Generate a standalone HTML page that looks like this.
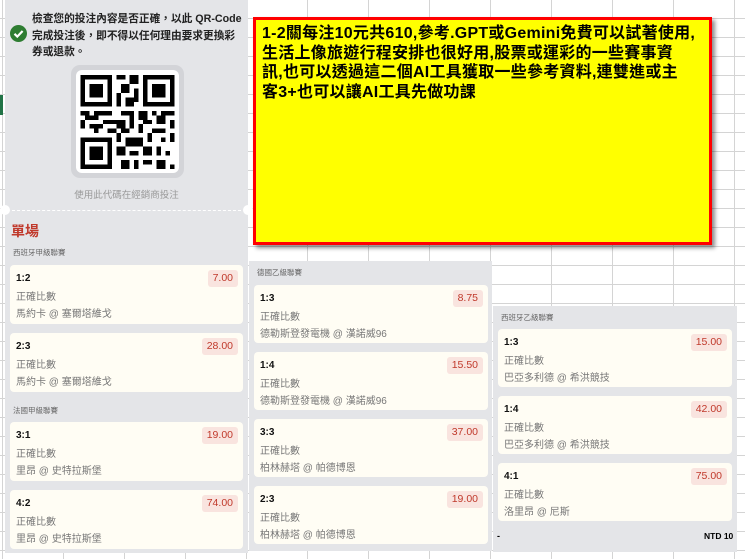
<!DOCTYPE html>
<html><head><meta charset="utf-8"><style>
*{margin:0;padding:0;box-sizing:border-box}
body{width:745px;height:559px;overflow:hidden;position:relative;background:#fff;font-family:"Liberation Sans","Noto Sans CJK TC",sans-serif;
background-image:linear-gradient(#d4d4d4 1px,transparent 1px),linear-gradient(90deg,#d4d4d4 1px,transparent 1px);
background-size:61px 19px;background-position:2px 18px}
.panel{position:absolute;background:#e4e5e8}
.card{position:absolute;background:#fffdf4;border-radius:4px}
.sc{position:absolute;left:6px;top:8px;font-size:10px;font-weight:bold;color:#111}
.t1{position:absolute;left:6px;top:23px;font-size:10px;color:#777}
.t2{position:absolute;left:6px;top:40px;font-size:10px;color:#777}
.od{position:absolute;right:5px;top:5px;height:17px;padding:0 5px;background:#f9e4df;color:#c0392b;font-size:10.5px;line-height:17px;border-radius:3px}
.lg{position:absolute;font-size:7.5px;color:#666}
.yb{position:absolute;left:253px;top:17px;width:459px;height:228px;background:#ffff00;border:3px solid #ff0000;box-shadow:3px 3px 4px rgba(0,0,0,.45);padding:4px 6px;font-size:16px;font-weight:bold;line-height:19.5px;color:#000;white-space:nowrap;letter-spacing:0.25px}
</style></head><body>
<div style="position:absolute;left:0;top:95px;width:3px;height:20px;background:#217346"></div>
<div class="panel" style="left:5px;top:0;width:243px;height:553px"></div>
<div style="position:absolute;left:12px;top:210px;width:229px;border-top:1px dashed #fff"></div>
<div style="position:absolute;left:0;top:205px;width:10px;height:10px;border-radius:50%;background:#fff"></div>
<div style="position:absolute;left:243px;top:205px;width:10px;height:10px;border-radius:50%;background:#fff"></div>
<svg style="position:absolute;left:10px;top:25px" width="17" height="17"><circle cx="8.5" cy="8.5" r="8.5" fill="#2e7d32"/><path d="M4.5 8.8l2.8 2.8 5.3-5.6" stroke="#fff" stroke-width="2.2" fill="none"/></svg>
<div style="position:absolute;left:32px;top:11px;font-size:10.7px;font-weight:bold;line-height:16.5px;color:#222;white-space:nowrap">檢查您的投注內容是否正確，以此 QR-Code<br>完成投注後，即不得以任何理由要求更換彩<br>券或退款。</div>
<div style="position:absolute;left:71px;top:65px;width:113px;height:113px;border-radius:9px;background:#d3d4d8"></div>
<div style="position:absolute;left:76px;top:70px;width:103px;height:103px;border-radius:6px;background:#fff"></div>
<svg style="position:absolute;left:80px;top:75px" width="95" height="94" viewBox="0 0 21 21" shape-rendering="crispEdges">
<g fill="#000">
<path d="M0 0h7v7h-7zM1 1v5h5v-5zM2 2h3v3h-3z" fill-rule="evenodd"/>
<path d="M14 0h7v7h-7zM15 1v5h5v-5zM16 2h3v3h-3z" fill-rule="evenodd"/>
<path d="M0 14h7v7h-7zM1 15v5h5v-5zM2 16h3v3h-3z" fill-rule="evenodd"/>
<path d="M8 0h2v1h-2zM11 0h2v2h-2zM9 2h2v2h-2zM8 4h1v3h-1zM10 5h2v2h-2zM12 3h1v3h-1zM9 8h3v1h-3zM0 8h2v1h-2zM3 8h4v1h-4zM13 8h2v2h-2zM16 8h1v1h-1zM18 8h3v1h-3zM1 9h3v1h-3zM5 10h3v1h-3zM0 10h1v2h-1zM2 11h3v1h-3zM8 10h2v2h-2zM11 9h1v3h-1zM14 10h2v1h-2zM17 9h2v2h-2zM20 10h1v2h-1zM3 12h1v1h-1zM6 12h2v1h-2zM9 12h2v1h-2zM13 11h1v2h-1zM16 12h3v1h-3zM8 13h1v2h-1zM10 14h4v2h-4zM15 13h1v2h-1zM18 14h1v1h-1zM20 13h1v2h-1zM8 16h2v2h-2zM11 17h2v1h-2zM14 16h2v2h-2zM17 16h1v2h-1zM19 17h1v1h-1zM9 19h2v2h-2zM12 19h1v2h-1zM14 19h2v1h-2zM17 19h2v2h-2zM20 20h1v1h-1z"/>
</g></svg>
<div style="position:absolute;left:5px;width:243px;top:187px;text-align:center;font-size:9.5px;color:#999">使用此代碼在經銷商投注</div>
<div style="position:absolute;left:11px;top:221px;font-size:14px;font-weight:bold;color:#c0392b">單場</div>
<div class="lg" style="left:13px;top:247px">西班牙甲級聯賽</div>
<div class="card" style="left:10px;top:265px;width:233px;height:59px"><div class="sc">1:2</div><div class="od">7.00</div><div class="t1">正確比數</div><div class="t2">馬約卡 @ 塞爾塔維戈</div></div>
<div class="card" style="left:10px;top:333px;width:233px;height:59px"><div class="sc">2:3</div><div class="od">28.00</div><div class="t1">正確比數</div><div class="t2">馬約卡 @ 塞爾塔維戈</div></div>
<div class="lg" style="left:13px;top:405px">法國甲級聯賽</div>
<div class="card" style="left:10px;top:422px;width:233px;height:59px"><div class="sc">3:1</div><div class="od">19.00</div><div class="t1">正確比數</div><div class="t2">里昂 @ 史特拉斯堡</div></div>
<div class="card" style="left:10px;top:490px;width:233px;height:59px"><div class="sc">4:2</div><div class="od">74.00</div><div class="t1">正確比數</div><div class="t2">里昂 @ 史特拉斯堡</div></div>

<div class="panel" style="left:249px;top:261px;width:243px;height:290px"></div>
<div class="lg" style="left:257px;top:267px">德國乙級聯賽</div>
<div class="card" style="left:254px;top:285px;width:234px;height:58px"><div class="sc">1:3</div><div class="od">8.75</div><div class="t1">正確比數</div><div class="t2">德勒斯登發電機 @ 漢諾威96</div></div>
<div class="card" style="left:254px;top:352px;width:234px;height:58px"><div class="sc">1:4</div><div class="od">15.50</div><div class="t1">正確比數</div><div class="t2">德勒斯登發電機 @ 漢諾威96</div></div>
<div class="card" style="left:254px;top:419px;width:234px;height:58px"><div class="sc">3:3</div><div class="od">37.00</div><div class="t1">正確比數</div><div class="t2">柏林赫塔 @ 帕德博恩</div></div>
<div class="card" style="left:254px;top:486px;width:234px;height:58px"><div class="sc">2:3</div><div class="od">19.00</div><div class="t1">正確比數</div><div class="t2">柏林赫塔 @ 帕德博恩</div></div>

<div class="panel" style="left:493px;top:306px;width:244px;height:246px"></div>
<div class="lg" style="left:501px;top:312px">西班牙乙級聯賽</div>
<div class="card" style="left:498px;top:329px;width:234px;height:58px"><div class="sc">1:3</div><div class="od">15.00</div><div class="t1">正確比數</div><div class="t2">巴亞多利德 @ 希洪競技</div></div>
<div class="card" style="left:498px;top:396px;width:234px;height:58px"><div class="sc">1:4</div><div class="od">42.00</div><div class="t1">正確比數</div><div class="t2">巴亞多利德 @ 希洪競技</div></div>
<div class="card" style="left:498px;top:463px;width:234px;height:58px"><div class="sc">4:1</div><div class="od">75.00</div><div class="t1">正確比數</div><div class="t2">洛里昂 @ 尼斯</div></div>
<div style="position:absolute;left:497px;top:531px;font-size:9px;font-weight:bold">-</div>
<div style="position:absolute;left:704px;top:531px;font-size:8.5px;font-weight:bold">NTD 10</div>

<div class="yb">1-2關每注10元共610,參考.GPT或Gemini免費可以試著使用,<br>生活上像旅遊行程安排也很好用,股票或運彩的一些賽事資<br>訊,也可以透過這二個AI工具獲取一些參考資料,連雙進或主<br>客3+也可以讓AI工具先做功課</div>
</body></html>
